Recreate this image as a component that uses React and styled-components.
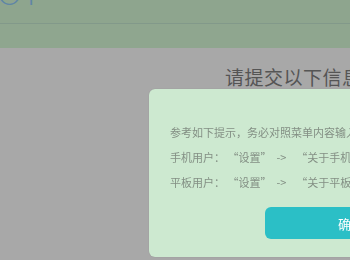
import styled, { createGlobalStyle } from 'styled-components';

const GlobalStyle = createGlobalStyle`
	html, body {
		margin: 0;
		padding: 0;
		width: 350px;
		height: 260px;
		overflow: hidden;
		background: #a8a8a8;
		font-family: 'Noto Sans CJK SC', 'Noto Sans', sans-serif;
	}
`;

const Page = styled.div`
	width: 350px;
	height: 260px;
	overflow: hidden;
	background: #a8a8a8;
`;

const Header = styled.div`
	height: 48px;
	background: #8ea58e;
	display: flex;
	flex-direction: column;
`;

const LogoBar = styled.div`
	height: 23px;
	border-bottom: 1px solid #82998a;
	overflow: hidden;
`;

const Logo = styled.div`
	margin-top: -24px;
	margin-left: -4px;
	font-family: 'DejaVu Sans', sans-serif;
	font-weight: 300;
	font-size: 34px;
	line-height: 34px;
	color: #5f86a6;
	letter-spacing: -2px;
`;

const NavBand = styled.div`
	flex: 1;
	background: #8fa68f;
`;

const Content = styled.div`
	padding: 16px 0 0 225px;
	white-space: nowrap;
`;

const Title = styled.h1`
	margin: 0;
	font-size: 19px;
	line-height: 26px;
	font-weight: 400;
	color: #555555;
	letter-spacing: 0.5px;
`;

const Modal = styled.div`
	position: fixed;
	left: 149px;
	top: 89px;
	width: 404px;
	box-sizing: border-box;
	padding: 31px 21px 18px;
	background: #cde9d0;
	border-radius: 6px;
	box-shadow: 0 0 1px rgba(0, 0, 0, 0.2);
`;

const Line = styled.p`
	margin: 0;
	font-size: 11px;
	line-height: 25px;
	color: #838f84;
	white-space: pre;
`;

const Button = styled.button`
	display: block;
	margin: 12px auto 0;
	width: 172px;
	height: 32px;
	border: none;
	border-radius: 6px;
	background: #2bbfc6;
	color: #ffffff;
	font-family: 'Noto Sans CJK SC', sans-serif;
	font-size: 13px;
`;

export default function App() {
	return (
		<Page>
			<GlobalStyle />
			<Header>
				<LogoBar>
					<Logo>OT</Logo>
				</LogoBar>
				<NavBand />
			</Header>
			<Content>
				<Title>请提交以下信息</Title>
			</Content>
			<Modal>
				<Line>参考如下提示，务必对照菜单内容输入</Line>
				<Line>手机用户： “设置”  -&gt;    “关于手机”</Line>
				<Line>平板用户： “设置”  -&gt;    “关于平板”</Line>
				<Button>确定</Button>
			</Modal>
		</Page>
	);
}
